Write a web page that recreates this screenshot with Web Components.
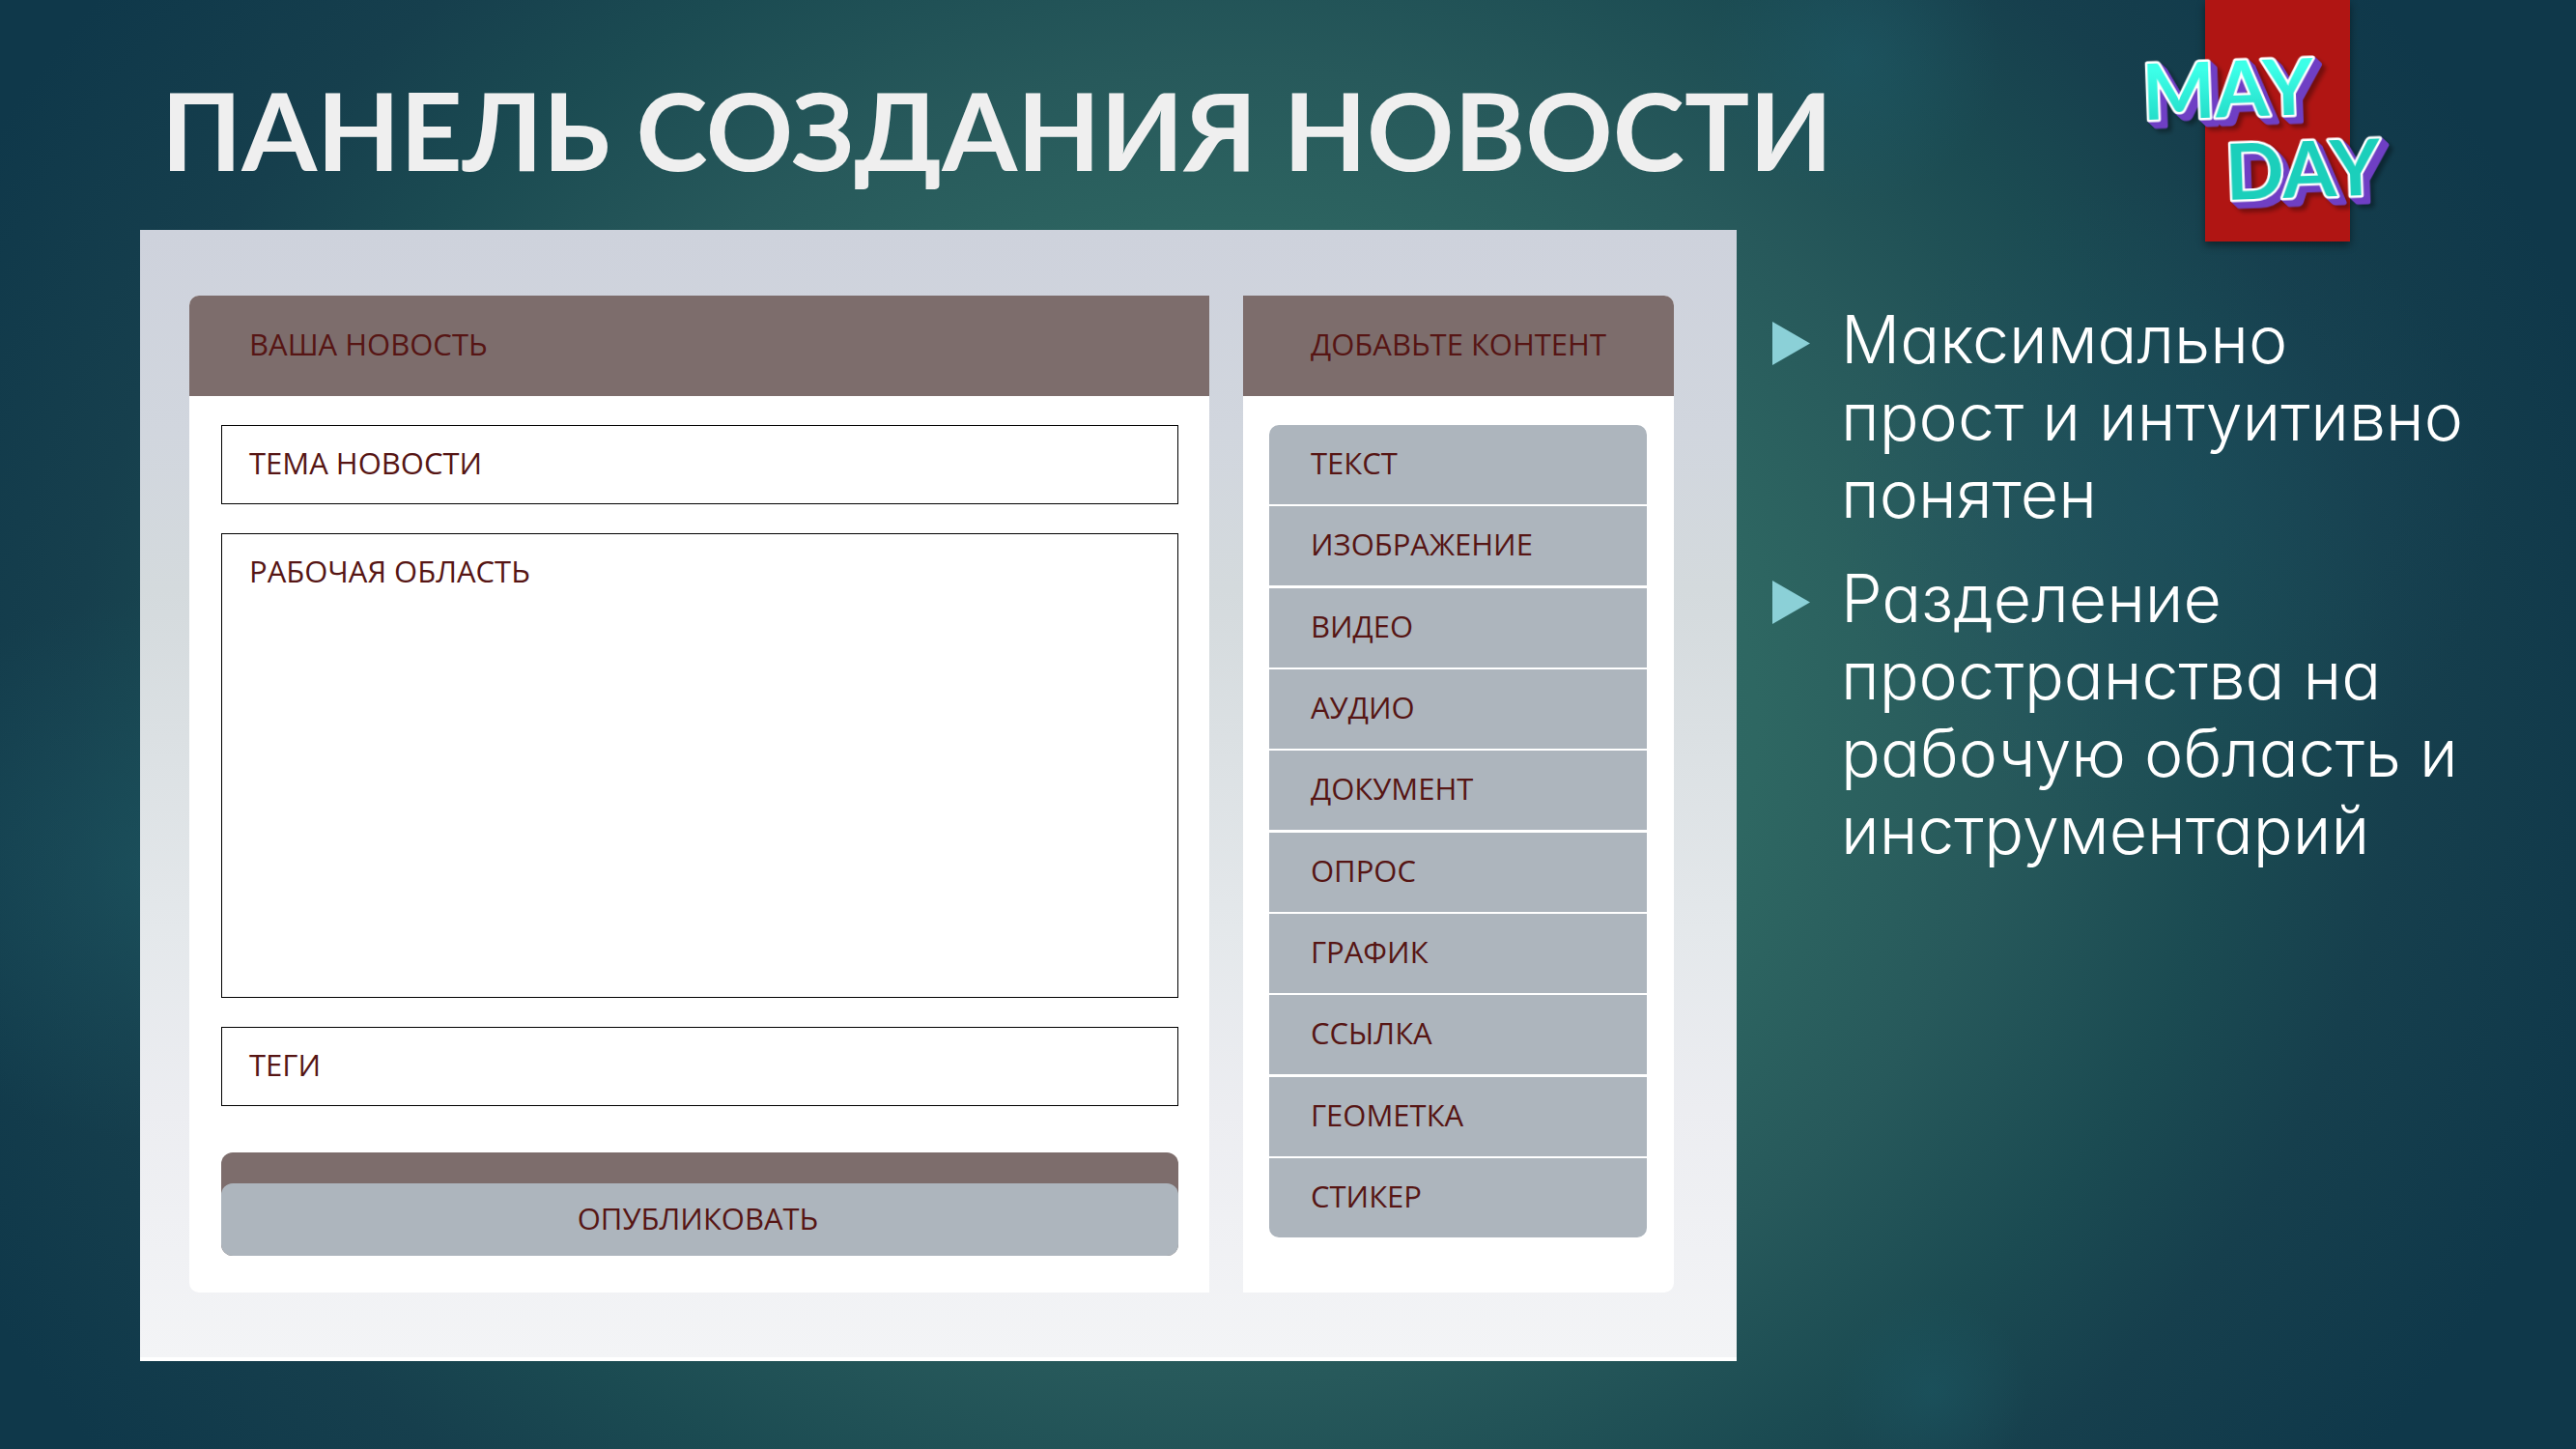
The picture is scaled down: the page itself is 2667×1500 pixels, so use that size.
<!DOCTYPE html>
<html lang="ru">
<head>
<meta charset="utf-8">
<title>Панель создания новости</title>
<style>
  html, body { margin: 0; }
  body {
    min-height: 100vh;
    font-family: "Open Sans", "Noto Sans", sans-serif;
    background: #0f384a;
  }
</style>
</head>
<body>
<news-slide>
  <slide-title slot="title">ПАНЕЛЬ СОЗДАНИЯ НОВОСТИ</slide-title>
  <mayday-logo slot="logo"></mayday-logo>
  <editor-panel slot="panel">
    <panel-card class="main" side="left">
      <span slot="heading">ВАША НОВОСТЬ</span>
      <news-form></news-form>
    </panel-card>
    <panel-card class="tools" side="right">
      <span slot="heading">ДОБАВЬТЕ КОНТЕНТ</span>
      <tool-list>
        <tool-item>ТЕКСТ</tool-item>
        <tool-item>ИЗОБРАЖЕНИЕ</tool-item>
        <tool-item>ВИДЕО</tool-item>
        <tool-item>АУДИО</tool-item>
        <tool-item>ДОКУМЕНТ</tool-item>
        <tool-item>ОПРОС</tool-item>
        <tool-item>ГРАФИК</tool-item>
        <tool-item>ССЫЛКА</tool-item>
        <tool-item>ГЕОМЕТКА</tool-item>
        <tool-item>СТИКЕР</tool-item>
      </tool-list>
    </panel-card>
  </editor-panel>
  <bullet-list slot="notes">
    <bullet-item>Максимально прост и интуитивно понятен</bullet-item>
    <bullet-item>Разделение пространства на рабочую область и инструментарий</bullet-item>
  </bullet-list>
</news-slide>

<script>
function define(name, html) {
  const template = document.createElement('template');
  template.innerHTML = html;
  customElements.define(name, class extends HTMLElement {
    constructor() {
      super();
      this.attachShadow({ mode: 'open' }).append(template.content.cloneNode(true));
    }
  });
}

define('news-slide', `
  <style>
    :host {
      display: flex; flex-direction: column; box-sizing: border-box; min-height: 100vh;
      background:
        radial-gradient(circle 150px at 72% 4%, rgba(31, 92, 108, .45), transparent),
        radial-gradient(circle 100px at 75% 96%, rgba(28, 88, 100, .5), transparent),
        radial-gradient(ellipse 320px 280px at 6% 60%, rgba(30, 92, 104, .45), transparent),
        radial-gradient(circle 340px at 84% 35%, rgba(28, 78, 100, .4), transparent),
        radial-gradient(ellipse 48% 73% at 48% 50%,
          #32706a 0%, #2e6762 42%, #27595b 62%, #1b4b52 80%, #163f4d 94%, #0f384a 115%);
    }
    header { display: flex; justify-content: space-between; height: 238px; }
    main { display: flex; align-items: flex-start; padding: 0 0 91px 145px; }
    .panel { flex: 1653 1 0; min-width: 0; }
    .notes { flex: 869 1 0; min-width: 0; }
  </style>
  <header><slot name="title"></slot><slot name="logo"></slot></header>
  <main>
    <div class="panel"><slot name="panel"></slot></div>
    <div class="notes"><slot name="notes"></slot></div>
  </main>`);

define('slide-title', `
  <style>
    :host { display: block; padding: 66px 0 0 167px; }
    h1 { margin: 0; font: 700 112px/136px Lato, "Open Sans", sans-serif; color: #efefef; white-space: nowrap; }
  </style>
  <h1><slot></slot></h1>`);

define('mayday-logo', `
  <style>
    :host { display: block; margin-right: 172px; }
    svg { display: block; overflow: visible; }
    .ribbon { fill: #b01513; filter: drop-shadow(0 4px 4px rgba(0, 0, 0, .45)); }
    text {
      font: 700 80px Lato, sans-serif; stroke: #fff; stroke-width: 5px;
      stroke-linejoin: round; paint-order: stroke;
      filter: drop-shadow(1px 1px 0 #6f3fc4) drop-shadow(2px 2px 0 #6f3fc4)
              drop-shadow(4px 4px 0 #6f3fc4) drop-shadow(4px 4px 2px rgba(0, 0, 0, .35));
    }
  </style>
  <svg width="285" height="260" viewBox="0 0 285 260" role="img" aria-label="MAY DAY">
    <defs>
      <linearGradient id="may" x1="0" y1="0" x2="0" y2="1">
        <stop offset=".3" stop-color="#3cffe8"/><stop offset=".85" stop-color="#24dcc8"/>
      </linearGradient>
    </defs>
    <rect class="ribbon" x="73" y="0" width="150" height="250"/>
    <text x="8" y="121" fill="url(#may)" transform="rotate(-2 100 100)">MAY</text>
    <text x="94" y="204" fill="#1bcfbb" transform="rotate(-2 180 180)">DAY</text>
  </svg>`);

define('editor-panel', `
  <style>
    :host {
      display: flex; gap: 35px; padding: 68px 65px 67px 51px; border-bottom: 4px solid #fff;
      background: linear-gradient(#ced2dc, #d1d6de 18%, #d4dadd 32%, #e4e8eb 62%, #ecedf1 78%, #f3f4f6);
      background-clip: padding-box;
    }
    ::slotted(.main) { flex: 1056 1 0; }
    ::slotted(.tools) { flex: 446 1 0; --head-indent: 70px; --body-pad: 30px 28px 57px 27px; }
  </style>
  <slot></slot>`);

define('panel-card', `
  <style>
    :host { display: flex; flex-direction: column; min-width: 0; background: #fff; overflow: hidden; }
    :host([side="left"]) { border-radius: 10px 0 0 10px; }
    :host([side="right"]) { border-radius: 0 10px 10px 0; }
    h2 {
      margin: 0; padding: 0 0 4px var(--head-indent, 62px); background: #7d6d6c; color: #561514;
      font-size: 31px; font-weight: 400; line-height: 100px; white-space: nowrap;
    }
    .body { padding: var(--body-pad, 30px 32px 38px 33px); }
  </style>
  <h2><slot name="heading"></slot></h2>
  <div class="body"><slot></slot></div>`);

define('news-form', `
  <style>
    :host { display: block; color: #561514; font-size: 31px; line-height: 40px; }
    form { display: flex; flex-direction: column; gap: 30px; }
    .field {
      display: flex; gap: 20px; box-sizing: border-box; height: 82px;
      padding: 18px 28px; border: 1px solid #000; background: #fff;
    }
    .area { flex-direction: column; gap: 10px; height: 481px; }
    label { white-space: nowrap; }
    input, textarea {
      flex: 1; min-width: 0; padding: 0; border: 0; outline: 0; background: none;
      color: inherit; font: inherit; resize: none;
    }
    .publish { margin-top: 18px; padding-top: 32px; border-radius: 12px; background: #7d6d6c; }
    button {
      display: block; width: 100%; height: 75px; padding: 0 4px 4px 0; border: 0; border-radius: 12px;
      background: #adb5bd; color: inherit; font: inherit; cursor: pointer;
    }
  </style>
  <form>
    <div class="field"><label for="topic">ТЕМА НОВОСТИ</label><input id="topic" type="text"></div>
    <div class="field area"><label for="work">РАБОЧАЯ ОБЛАСТЬ</label><textarea id="work"></textarea></div>
    <div class="field"><label for="tags">ТЕГИ</label><input id="tags" type="text"></div>
    <div class="publish"><button type="button">ОПУБЛИКОВАТЬ</button></div>
  </form>`);

define('tool-list', `
  <style>
    :host {
      display: flex; flex-direction: column; justify-content: space-between;
      min-height: 841px; border-radius: 10px; overflow: hidden;
    }
  </style>
  <slot></slot>`);

define('tool-item', `
  <style>
    :host { display: block; }
    button {
      display: block; width: 100%; height: 82px; padding: 0 0 4px 43px; border: 0; background: #adb5bd;
      color: #561514; font: inherit; font-size: 31px; text-align: left; cursor: pointer;
    }
  </style>
  <button type="button"><slot></slot></button>`);

define('bullet-list', `
  <style>
    :host { display: flex; flex-direction: column; gap: 28px; padding: 73px 104px 0 37px; }
  </style>
  <slot></slot>`);

define('bullet-item', `
  <style>
    :host {
      display: flex; gap: 32px; color: #fff;
      font: 300 68px/80px Inter, "Open Sans", sans-serif; font-feature-settings: "cv11";
    }
    svg { flex: none; margin-top: 22px; }
  </style>
  <svg width="39" height="45" viewBox="0 0 39 45" aria-hidden="true"><path d="M0 0 39 22.5 0 45Z" fill="#8bd0d7"/></svg>
  <div><slot></slot></div>`);
</script>
</body>
</html>
